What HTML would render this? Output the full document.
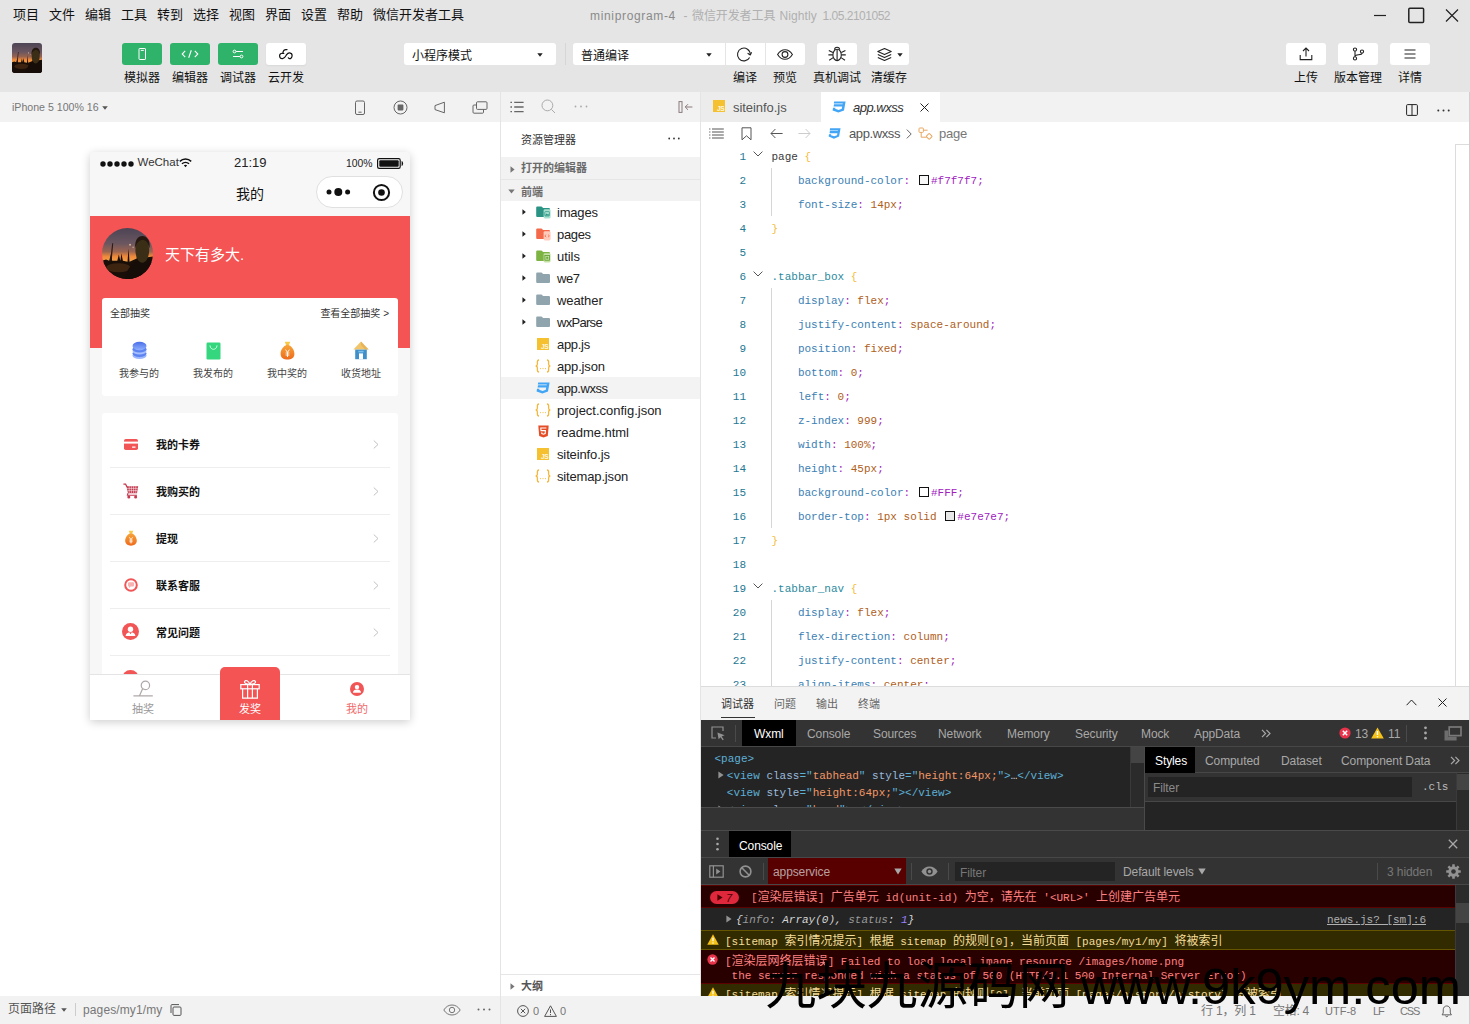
<!DOCTYPE html>
<html lang="zh-CN">
<head>
<meta charset="utf-8">
<title>miniprogram-4 - 微信开发者工具 Nightly 1.05.2101052</title>
<style>
*{box-sizing:border-box;margin:0;padding:0}
html,body{width:1470px;height:1024px;overflow:hidden;background:#fff}
body{font-family:"Liberation Sans","Noto Sans CJK SC",sans-serif;font-size:12px;color:#222;position:relative}
.abs{position:absolute}
.t{position:absolute;white-space:nowrap;line-height:1}
svg{position:absolute;overflow:visible}
/* top */
#menubar{left:0;top:0;width:1470px;height:30px;background:#e5e5e5}
#menubar .t{top:8px;font-size:13px;color:#111}
#toolbar{left:0;top:30px;width:1470px;height:62px;background:#e5e5e5}
.tb{position:absolute;top:13px;height:22px;border-radius:3px;background:#fff}
.tb.g{background:#2fb26a}
.tl{position:absolute;top:41px;font-size:12px;color:#111;white-space:nowrap;line-height:14px;text-align:center}
/* simulator */
#simbar{left:0;top:92px;width:500px;height:30px;background:#f2f2f2}
#simarea{left:0;top:122px;width:500px;height:874px;background:#fff}
#simfoot{left:0;top:996px;width:500px;height:28px;background:#f2f2f2}
#vsplit1{left:500px;top:92px;width:1px;height:932px;background:#e4e4e4}
#vsplit2{left:700px;top:92px;width:1px;height:904px;background:#e4e4e4}

/* phone */
#phone{left:90px;top:152px;width:320px;height:568px;background:#f7f7f7;border-radius:4px 4px 0 0;overflow:hidden;box-shadow:0 2px 10px rgba(0,0,0,.2)}
#phone .t{color:#111}
.card{position:absolute;left:12px;width:296px;background:#fff;border-radius:3px}
.gi{position:absolute;top:71px;width:74px;text-align:center;font-size:10px;color:#444;line-height:10px;white-space:nowrap}
.row{position:absolute;left:8px;width:280px;height:47px;border-bottom:1px solid #eee}
.row .t{left:46px;top:19px;font-size:11px;font-weight:bold;color:#222}
.row .ar{left:263px;top:19px}

/* tree */
#tree{left:501px;top:92px;width:199px;height:904px;background:#fff}
.tr{position:absolute;left:0;width:199px;height:22px}
.tr .t{left:56px;top:4.5px;font-size:13px;color:#222;letter-spacing:-0.2px}
.tr .fa{left:20.8px;top:7.8px}
.tr .ic{left:35px;top:4px}

/* editor */
#editor{left:701px;top:92px;width:769px;height:594px;background:#fff;overflow:hidden}
.mono{font-family:"Liberation Mono","Noto Sans CJK SC",monospace}
.cl{position:absolute;left:0;height:24px;width:760px;font-family:"Liberation Mono",monospace;font-size:11px;line-height:24px;white-space:pre;color:#3a3a3a}
.cl .ln{position:absolute;left:0;width:45px;text-align:right;color:#237893}
.cl .cd{position:absolute;left:70.5px}
.cl .fo{left:52px;top:6px}
.p{color:#3b80b4}.k{color:#a020c0}.v{color:#b0601a}.b{color:#f2bd3e}.s{color:#2b8a9e}
.sw{display:inline-block;width:14.2px;height:10px;position:relative;vertical-align:-1px}
.sw i{position:absolute;left:2.2px;top:0;width:10px;height:10px;border:1px solid #111}

/* debugger */
#debugger{left:701px;top:686px;width:769px;height:310px;background:#242424;overflow:hidden;font-size:12px}
#debugger .dt{position:absolute;white-space:nowrap;line-height:1;font-size:12px;color:#a8a8a8;top:8px;margin-top:1px;letter-spacing:-0.1px}
.el{position:absolute;white-space:pre;font-family:"Liberation Mono",monospace;font-size:11px;line-height:17px;color:#5db0d7}
.el .an{color:#9bbbdc}.el .av{color:#f29766}
.cm{position:absolute;left:0;width:754px;white-space:pre;font-family:"Liberation Mono","Noto Sans CJK SC",monospace;font-size:11px}
.cm .t{font-size:11px;line-height:12px}
.cj{font-size:12px}
#status{left:501px;top:996px;width:969px;height:28px;background:#f2f2f2}
#status .t{top:9.5px;font-size:11px;color:#777}
</style>
</head>
<body>
<!-- ============ MENUBAR ============ -->
<div id="menubar" class="abs">
  <span class="t" style="left:13px">项目</span>
  <span class="t" style="left:49px">文件</span>
  <span class="t" style="left:85px">编辑</span>
  <span class="t" style="left:121px">工具</span>
  <span class="t" style="left:157px">转到</span>
  <span class="t" style="left:193px">选择</span>
  <span class="t" style="left:229px">视图</span>
  <span class="t" style="left:265px">界面</span>
  <span class="t" style="left:301px">设置</span>
  <span class="t" style="left:337px">帮助</span>
  <span class="t" style="left:373px">微信开发者工具</span>
  <span class="t" id="wtitle" style="left:590px;top:10px;font-size:12px;color:#8a8a8a;letter-spacing:0.66px">miniprogram-4</span>
  <span class="t" style="left:683.5px;top:10px;font-size:12px;color:#b0b0b0">-</span>
  <span class="t" style="left:692px;top:10px;font-size:12px;color:#b0b0b0;letter-spacing:-0.1px">微信开发者工具</span>
  <span class="t" style="left:779.5px;top:10px;font-size:12px;color:#b0b0b0;letter-spacing:0.1px">Nightly</span>
  <span class="t" style="left:822.5px;top:10px;font-size:12px;color:#b0b0b0;letter-spacing:-0.49px">1.05.2101052</span>
  <svg style="left:1373px;top:8px" width="90" height="16" viewBox="0 0 90 16" fill="none" stroke="#222" stroke-width="1.2">
    <path d="M1 7.5H13"/>
    <rect x="35.8" y="0.2" width="14.8" height="14.4" rx="1" stroke-width="1.5"/>
    <path d="M73 1.5L85 13.5M85 1.5L73 13.5"/>
  </svg>
</div>
<!-- ============ TOOLBAR ============ -->
<div id="toolbar" class="abs">
  <div class="abs" id="tavatar" style="left:12px;top:13px;width:30px;height:30px;border-radius:3px;overflow:hidden"><svg style="left:0;top:0" width="30" height="30" viewBox="0 0 100 100" preserveAspectRatio="none"><defs><linearGradient id="sky2" x1="0" y1="0" x2="0" y2="1"><stop offset="0" stop-color="#4c4454"/><stop offset=".3" stop-color="#6a5660"/><stop offset=".46" stop-color="#9a6450"/><stop offset=".56" stop-color="#ee8a3a"/><stop offset=".66" stop-color="#f2a24c"/><stop offset=".7" stop-color="#3a1e0e"/><stop offset="1" stop-color="#120a06"/></linearGradient></defs>
<rect width="100" height="100" fill="url(#sky2)"/>
<path d="M0 64L8 62L14 64L18 50L20 64L30 64L33 52L36 64L38 50L41 64L50 66L52 40L54 66L68 60L69 48L71 60L100 56V100H0Z" fill="#1a0e08"/>
<path d="M20 30L22 30L19 64L16 64Z" fill="#2a1a18"/>
<ellipse cx="32" cy="78" rx="24" ry="9" fill="#3c2410"/>
<path d="M46 100C48 80 56 72 70 64L92 60L100 70V100Z" fill="#160c08"/>
<ellipse cx="79" cy="43" rx="13.5" ry="25" fill="#3a2e16"/>
<path d="M65 40C64 22 72 14 82 16C92 18 95 30 93 40C90 26 84 22 76 24C70 26 67 32 65 40Z" fill="#241810"/>
<circle cx="55" cy="33" r="2" fill="#e8c8a8" opacity=".8"/><circle cx="61" cy="38" r="1.6" fill="#e8c8a8" opacity=".6"/></svg></div>
  <div class="tb g" style="left:122px;width:40px"><svg style="left:14px;top:5px" width="12" height="12" viewBox="0 0 12 12" fill="none" stroke="#fff" stroke-width="1"><rect x="3" y="0.5" width="6.5" height="11" rx="0.6"/><path d="M4.8 2.4H7.8"/></svg></div>
  <div class="tb g" style="left:170px;width:40px"><svg style="left:11px;top:6px" width="18" height="10" viewBox="0 0 18 10" fill="none" stroke="#fff" stroke-width="1.1"><path d="M4.2 1.8L1.2 5L4.2 8.2M13.8 1.8L16.8 5L13.8 8.2M10.3 1.2L7.7 8.8"/></svg></div>
  <div class="tb g" style="left:218px;width:40px"><svg style="left:14px;top:6px" width="12" height="10" viewBox="0 0 12 10" fill="none" stroke="#fff" stroke-width="1"><circle cx="2.5" cy="2.5" r="1.4"/><path d="M4 2.5H11"/><circle cx="9.5" cy="7.5" r="1.4"/><path d="M1 7.5H8"/></svg></div>
  <div class="tb" style="left:266px;width:40px;box-shadow:0 1px 2px rgba(0,0,0,.06)"><svg style="left:12.8px;top:5.8px" width="14" height="10.5" viewBox="0 0 14 10.5" fill="none" stroke="#111" stroke-width="1.2" stroke-linecap="round"><path d="M8 0.7C5.4 0.1 4 1.4 3.9 4.3C1.6 4 0.4 5.4 0.6 7C0.8 8.8 2.2 9.8 3.6 9.7C5.6 9.6 6.6 7.2 7.6 5.6C8.6 4.2 9.6 3.7 10.6 3.8C12.2 4 13.2 5.2 13.1 6.8C13 8.6 11.6 9.8 10.4 9.6C9.8 9.5 9.5 9.2 9.3 8.8"/><path d="M3.9 4.3L4.9 4.5"/></svg></div>
  <div class="tl" style="left:122px;width:40px">模拟器</div>
  <div class="tl" style="left:170px;width:40px">编辑器</div>
  <div class="tl" style="left:218px;width:40px">调试器</div>
  <div class="tl" style="left:266px;width:40px">云开发</div>

  <div class="tb" style="left:404px;width:152px"><span class="t" style="left:8px;top:6.5px;font-size:12px;color:#111">小程序模式</span><svg style="left:133px;top:9.7px" width="6" height="4" viewBox="0 0 6 4"><path d="M0.3 0.3H5.7L3 3.8Z" fill="#222"/></svg></div>
  <div class="abs" style="left:565px;top:13px;width:1px;height:22px;background:#d6d6d6"></div>
  <div class="tb" style="left:573px;width:232px"><span class="t" style="left:8px;top:6.5px;font-size:12px;color:#111">普通编译</span><svg style="left:133px;top:9.7px" width="6" height="4" viewBox="0 0 6 4"><path d="M0.3 0.3H5.7L3 3.8Z" fill="#222"/></svg>
    <div class="abs" style="left:152px;top:0;width:1px;height:22px;background:#e5e5e5"></div>
    <div class="abs" style="left:192px;top:0;width:1px;height:22px;background:#e5e5e5"></div>
    <svg style="left:163.3px;top:3.8px" width="16" height="16" viewBox="0 0 16 16" fill="none" stroke="#222" stroke-width="1.1"><path d="M13.6 10.4A6.4 6.4 0 1 1 14.3 7.4"/><path d="M11.6 6.2L14.3 8L15.6 5.2" stroke-linejoin="round"/></svg>
    <svg style="left:204px;top:5.5px" width="16" height="11" viewBox="0 0 16 11" fill="none" stroke="#222" stroke-width="1.1"><path d="M0.6 5.5C2.6 2.2 5.2 0.7 8 0.7C10.8 0.7 13.4 2.2 15.4 5.5C13.4 8.8 10.8 10.3 8 10.3C5.2 10.3 2.6 8.8 0.6 5.5Z"/><circle cx="8" cy="5.5" r="2.9"/></svg>
  </div>
  <div class="tb" style="left:817px;width:40px"><svg style="left:11px;top:2px" width="18" height="18" viewBox="0 0 18 18" fill="none" stroke="#222" stroke-width="1.1"><ellipse cx="9.1" cy="9.9" rx="4.2" ry="5.7"/><path d="M9.1 4.4V15.4M6.5 4.8C6.6 3 7.6 2.2 9.1 2.2C10.6 2.2 11.6 3 11.7 4.8M4.9 7.6L0.8 5.4M13.3 7.6L17.4 5.4M4.8 9.9H0.4M13.4 9.9H17.8M5.2 12.6L1.2 15.2M13 12.6L17 15.2"/></svg></div>
  <div class="tb" style="left:869px;width:40px"><svg style="left:7.5px;top:4.6px" width="15" height="13" viewBox="0 0 15 13" fill="none" stroke="#222" stroke-width="1.1" stroke-linejoin="round"><path d="M7.5 0.6L14.2 3.6L7.5 6.6L0.8 3.6Z"/><path d="M0.8 6.6L7.5 9.6L14.2 6.6"/><path d="M0.8 9.4L7.5 12.4L14.2 9.4"/></svg><svg style="left:28px;top:9.7px" width="6" height="4" viewBox="0 0 6 4"><path d="M0.3 0.3H5.7L3 3.8Z" fill="#222"/></svg></div>
  <div class="tl" style="left:725px;width:40px">编译</div>
  <div class="tl" style="left:765px;width:40px">预览</div>
  <div class="tl" style="left:807px;width:60px">真机调试</div>
  <div class="tl" style="left:859px;width:60px">清缓存</div>

  <div class="tb" style="left:1286px;width:40px"><svg style="left:13px;top:4px" width="14" height="14" viewBox="0 0 14 14" fill="none" stroke="#222" stroke-width="1.1"><path d="M7 9.5V1.2M4 4L7 1.1L10 4M1.2 8V12.6H12.8V8"/></svg></div>
  <div class="tb" style="left:1338px;width:40px"><svg style="left:14px;top:4px" width="13" height="14" viewBox="0 0 13 14" fill="none" stroke="#222" stroke-width="1.1"><circle cx="3" cy="2.6" r="1.6"/><circle cx="3" cy="11.4" r="1.6"/><circle cx="10" cy="4.6" r="1.6"/><path d="M3 4.2V9.8M3 9.4C3 7 10 8.6 10 6.2"/></svg></div>
  <div class="tb" style="left:1390px;width:40px"><svg style="left:14px;top:6px" width="12" height="10" viewBox="0 0 12 10" fill="none" stroke="#222" stroke-width="1.2"><path d="M0.5 1H11.5M0.5 5H11.5M0.5 9H11.5"/></svg></div>
  <div class="tl" style="left:1276px;width:60px">上传</div>
  <div class="tl" style="left:1328px;width:60px">版本管理</div>
  <div class="tl" style="left:1380px;width:60px">详情</div>
</div>
<!-- ============ SIMULATOR ============ -->
<div id="simbar" class="abs">
  <span class="t" style="left:12px;top:10px;font-size:10.6px;color:#777">iPhone 5 100% 16</span>
  <svg style="left:102px;top:13.5px" width="6" height="4" viewBox="0 0 6 4"><path d="M0.2 0.3H5.8L3 3.8Z" fill="#555"/></svg>
  <svg style="left:354px;top:8px" width="12" height="16" viewBox="0 0 12 16" fill="none" stroke="#666" stroke-width="1"><rect x="1.5" y="1" width="9" height="13.5" rx="1.5"/><path d="M4.4 12.2H7.6"/></svg>
  <svg style="left:393px;top:8px" width="15" height="15" viewBox="0 0 15 15" fill="none" stroke="#666" stroke-width="1"><circle cx="7.5" cy="7.5" r="6.5"/><rect x="4.6" y="4.6" width="5.8" height="5.8" rx="0.8" fill="#666" stroke="none"/></svg>
  <svg style="left:434px;top:9px" width="12" height="13" viewBox="0 0 12 13" fill="none" stroke="#666" stroke-width="1" stroke-linejoin="round"><path d="M1 4.6V8.6L10.4 11.8V1.2Z"/></svg>
  <svg style="left:472px;top:9px" width="16" height="13" viewBox="0 0 16 13" fill="none" stroke="#666" stroke-width="1"><rect x="4.5" y="0.8" width="10.5" height="7.6" rx="1"/><path d="M4.5 4H2A1 1 0 0 0 1 5V11.2A1 1 0 0 0 2 12.2H10.5A1 1 0 0 0 11.5 11.2V8.6"/></svg>
</div>
<div id="simarea" class="abs"></div>
<div id="phone" class="abs">
  <!-- status -->
  <svg style="left:10px;top:8px" width="36" height="8" viewBox="0 0 36 8"><g fill="#111"><circle cx="3" cy="4" r="2.7"/><circle cx="10" cy="4" r="2.7"/><circle cx="17" cy="4" r="2.7"/><circle cx="24" cy="4" r="2.7"/><circle cx="31" cy="4" r="2.7"/></g></svg>
  <span class="t" style="left:47.5px;top:5px;font-size:11.5px;color:#333">WeChat</span>
  <svg style="left:89px;top:6px" width="13" height="10" viewBox="0 0 13 10" fill="none" stroke="#111" stroke-width="1.5"><path d="M0.8 3.4C4 0.3 9 0.3 12.2 3.4"/><path d="M3 5.8C5 3.9 8 3.9 10 5.8"/><path d="M6.5 9.2L4.8 7.3C5.8 6.5 7.2 6.5 8.2 7.3Z" fill="#111" stroke="none"/></svg>
  <span class="t" style="left:144px;top:4px;font-size:13px;color:#222;width:32px;text-align:center">21:19</span>
  <span class="t" style="left:256px;top:6.5px;font-size:10.4px;color:#222">100%</span>
  <svg style="left:287px;top:6px" width="27" height="11" viewBox="0 0 27 11"><rect x="0.6" y="0.6" width="22.6" height="9.8" rx="1.6" fill="none" stroke="#111" stroke-width="1.2"/><rect x="2.3" y="2.3" width="19.4" height="6.4" rx="1" fill="#111"/><path d="M24.6 3C26.6 3.6 26.6 7.4 24.6 8Z" fill="#111"/></svg>
  <!-- nav -->
  <span class="t" style="left:140px;top:35px;width:40px;text-align:center;font-size:14px;color:#111">我的</span>
  <div class="abs" style="left:226px;top:24px;width:87px;height:32px;border:1px solid #e0e0e0;border-radius:16px;background:#fff">
    <svg style="left:9px;top:10px" width="25" height="10" viewBox="0 0 25 10" fill="#111"><circle cx="3" cy="5" r="2.5"/><circle cx="12.3" cy="5" r="4"/><circle cx="21.6" cy="5" r="2.5"/></svg>
    <svg style="left:55px;top:6px" width="19" height="19" viewBox="0 0 19 19"><circle cx="9.5" cy="9.5" r="7.6" fill="none" stroke="#111" stroke-width="2"/><circle cx="9.5" cy="9.5" r="3.3" fill="#111"/></svg>
  </div>
  <!-- red header -->
  <div class="abs" style="left:0;top:64px;width:320px;height:132px;background:#f45454"></div>
  <div class="abs" id="pavatar" style="left:12px;top:76px;width:51px;height:51px;border-radius:50%;overflow:hidden"><svg style="left:0;top:0" width="51" height="51" viewBox="0 0 100 100" preserveAspectRatio="none"><defs><linearGradient id="sky" x1="0" y1="0" x2="0" y2="1"><stop offset="0" stop-color="#4c4454"/><stop offset=".3" stop-color="#6a5660"/><stop offset=".46" stop-color="#9a6450"/><stop offset=".56" stop-color="#ee8a3a"/><stop offset=".66" stop-color="#f2a24c"/><stop offset=".7" stop-color="#3a1e0e"/><stop offset="1" stop-color="#120a06"/></linearGradient></defs>
<rect width="100" height="100" fill="url(#sky)"/>
<path d="M0 64L8 62L14 64L18 50L20 64L30 64L33 52L36 64L38 50L41 64L50 66L52 40L54 66L68 60L69 48L71 60L100 56V100H0Z" fill="#1a0e08"/>
<path d="M20 30L22 30L19 64L16 64Z" fill="#2a1a18"/>
<ellipse cx="32" cy="78" rx="24" ry="9" fill="#3c2410"/>
<path d="M46 100C48 80 56 72 70 64L92 60L100 70V100Z" fill="#160c08"/>
<ellipse cx="79" cy="43" rx="13.5" ry="25" fill="#3a2e16"/>
<path d="M65 40C64 22 72 14 82 16C92 18 95 30 93 40C90 26 84 22 76 24C70 26 67 32 65 40Z" fill="#241810"/>
<circle cx="55" cy="33" r="2" fill="#e8c8a8" opacity=".8"/><circle cx="61" cy="38" r="1.6" fill="#e8c8a8" opacity=".6"/></svg></div>
  <span class="t" style="left:75px;top:95px;font-size:15px;color:#fff">天下有多大.</span>
  <!-- card 1 -->
  <div class="card" style="top:146px;height:98px">
    <span class="t" style="left:8px;top:11px;font-size:10px;color:#333">全部抽奖</span>
    <span class="t" style="right:9px;top:11px;font-size:10px;color:#333">查看全部抽奖 &gt;</span>
    <svg style="left:30px;top:43px" width="15" height="19" viewBox="0 0 15 19"><defs><linearGradient id="gb" x1="0" y1="0" x2="0" y2="1"><stop offset="0" stop-color="#4a6fe8"/><stop offset="1" stop-color="#8fb0ff"/></linearGradient></defs><ellipse cx="7.5" cy="14.5" rx="7" ry="3.6" fill="#9db8ff"/><ellipse cx="7.5" cy="12.6" rx="7" ry="3.4" fill="#5d83f0"/><ellipse cx="7.5" cy="10" rx="7" ry="3.6" fill="#a6bfff"/><ellipse cx="7.5" cy="8.2" rx="7" ry="3.4" fill="#5d83f0"/><ellipse cx="7.5" cy="5" rx="7" ry="4.2" fill="url(#gb)"/></svg>
    <svg style="left:104px;top:44px" width="15" height="18" viewBox="0 0 15 18"><rect x="0.5" y="0.5" width="14" height="17" rx="1.2" fill="#34d67e"/><path d="M4 3.4C4 8.6 11 8.6 11 3.4" fill="none" stroke="#d8ffe8" stroke-width="0.9"/></svg>
    <svg style="left:178px;top:43px" width="15" height="19" viewBox="0 0 15 19"><defs><linearGradient id="go" x1="0" y1="0" x2="0" y2="1"><stop offset="0" stop-color="#f7a63a"/><stop offset="1" stop-color="#ee6a1c"/></linearGradient></defs><path d="M4.8 0.8H10.2L9 4H6Z" fill="#f7c948"/><path d="M7.5 3.6C12 5 14.6 9.4 14.4 13.2C14.2 17 11 18.6 7.5 18.6C4 18.6 0.8 17 0.6 13.2C0.4 9.4 3 5 7.5 3.6Z" fill="url(#go)"/><path d="M5.6 8.6L7.5 11.4L9.4 8.6M5.6 12H9.4M5.6 14H9.4M7.5 11.4V16" fill="none" stroke="#fff" stroke-width="0.9"/></svg>
    <svg style="left:251px;top:43px" width="16" height="19" viewBox="0 0 16 19"><path d="M8 0.4L15.6 8.6H0.4Z" fill="#f2c56b"/><path d="M8 0.4L15.6 8.6H12L8 4Z" fill="#e0a94a" opacity=".6"/><rect x="2.2" y="8.6" width="11.6" height="9.6" fill="#3f8fc8"/><rect x="6" y="12.4" width="4" height="5.8" fill="#fff"/><rect x="5.4" y="9.8" width="5.2" height="1.6" fill="#7fc0ea"/></svg>
    <div class="gi" style="left:0">我参与的</div>
    <div class="gi" style="left:74px">我发布的</div>
    <div class="gi" style="left:148px">我中奖的</div>
    <div class="gi" style="left:222px">收货地址</div>
  </div>
  <!-- card 2 -->
  <div class="card" style="top:261px;height:330px">
    <div class="row" style="top:8px"><span class="t">我的卡券</span>
      <svg style="left:13.5px;top:17.7px" width="14" height="11" viewBox="0 0 14 11"><rect width="14" height="11" rx="1.8" fill="#f25555"/><rect y="2.6" width="14" height="2" fill="#fff"/><rect x="8" y="7.4" width="3.6" height="1.3" rx=".4" fill="#fff"/></svg>
      <svg class="ar" width="6" height="9" viewBox="0 0 6 9" fill="none" stroke="#c2c2c2" stroke-width="1"><path d="M0.8 0.6L5 4.5L0.8 8.4"/></svg></div>
    <div class="row" style="top:55px"><span class="t">我购买的</span>
      <svg style="left:12.5px;top:15.4px" width="16" height="16" viewBox="0 0 16 16"><path d="M0.4 1.2H2.6L4 4" fill="none" stroke="#c4374c" stroke-width="1.2"/><path d="M3.4 3.2H15.2L14 10.2H5Z" fill="#c4374c"/><path d="M6.2 3.2V10M8.4 3.2V10M10.6 3.2V10M12.8 3.2V10M4 5.4H14.8M4.6 7.6H14.4" stroke="#fff" stroke-width=".5"/><path d="M5 10.2L4.4 12.2H14" fill="none" stroke="#c4374c" stroke-width="1.1"/><circle cx="5.8" cy="14" r="1.5" fill="#c4374c"/><circle cx="12.6" cy="14" r="1.5" fill="#c4374c"/></svg>
      <svg class="ar" width="6" height="9" viewBox="0 0 6 9" fill="none" stroke="#c2c2c2" stroke-width="1"><path d="M0.8 0.6L5 4.5L0.8 8.4"/></svg></div>
    <div class="row" style="top:102px"><span class="t">提现</span>
      <svg style="left:13.5px;top:14.7px" width="14" height="16" viewBox="0 0 15 19"><path d="M4.8 0.8H10.2L9 4H6Z" fill="#f7c948"/><path d="M7.5 3.6C12 5 14.6 9.4 14.4 13.2C14.2 17 11 18.6 7.5 18.6C4 18.6 0.8 17 0.6 13.2C0.4 9.4 3 5 7.5 3.6Z" fill="url(#go)"/><path d="M5.6 8.6L7.5 11.4L9.4 8.6M5.6 12H9.4M5.6 14H9.4M7.5 11.4V16" fill="none" stroke="#fff" stroke-width="1"/></svg>
      <svg class="ar" width="6" height="9" viewBox="0 0 6 9" fill="none" stroke="#c2c2c2" stroke-width="1"><path d="M0.8 0.6L5 4.5L0.8 8.4"/></svg></div>
    <div class="row" style="top:149px"><span class="t">联系客服</span>
      <svg style="left:14px;top:16px" width="14" height="14" viewBox="0 0 14 14"><circle cx="7" cy="7" r="5.8" fill="#fff" stroke="#f25555" stroke-width="2"/><path d="M4 5.2A1 1 0 0 1 5 4.2H9A1 1 0 0 1 10 5.2V7.6A1 1 0 0 1 9 8.6H6.6L5 10V8.6A1 1 0 0 1 4 7.6Z" fill="#f9b0b0"/></svg>
      <svg class="ar" width="6" height="9" viewBox="0 0 6 9" fill="none" stroke="#c2c2c2" stroke-width="1"><path d="M0.8 0.6L5 4.5L0.8 8.4"/></svg></div>
    <div class="row" style="top:196px"><span class="t">常见问题</span>
      <svg style="left:12px;top:14.2px" width="17" height="17" viewBox="0 0 17 17"><circle cx="8.5" cy="8.5" r="8.5" fill="#f25555"/><circle cx="8.5" cy="6.2" r="2.7" fill="#fff"/><path d="M3.6 13C3.8 10.4 5.6 9.2 8.5 9.2C11.4 9.2 13.2 10.4 13.4 13Z" fill="#fff"/><path d="M7.2 9.2L8.5 11.2L9.8 9.2Z" fill="#f25555"/></svg>
      <svg class="ar" width="6" height="9" viewBox="0 0 6 9" fill="none" stroke="#c2c2c2" stroke-width="1"><path d="M0.8 0.6L5 4.5L0.8 8.4"/></svg></div>
    <div class="row" style="top:243px;border:0">
      <svg style="left:12px;top:14.2px" width="17" height="17" viewBox="0 0 17 17"><circle cx="8.5" cy="8.5" r="8.5" fill="#f25555"/></svg></div>
  </div>
  <!-- tabbar -->
  <div class="abs" style="left:0;top:522px;width:320px;height:46px;background:#fff;border-top:1px solid #e4e4e4"></div>
  <div class="abs" style="left:130px;top:515px;width:60px;height:53px;background:#f45454;border-radius:5px 5px 0 0"></div>
  <svg style="left:43px;top:528px" width="20" height="18" viewBox="0 0 20 18" fill="none" stroke="#b0a8a8" stroke-width="1.2"><circle cx="12.4" cy="5.4" r="4.2"/><path d="M9.6 8.8L6.6 15.6M0.4 15.8H19.8"/></svg>
  <span class="t" style="left:33px;top:552px;width:40px;text-align:center;font-size:11px;color:#999">抽奖</span>
  <svg style="left:150px;top:527px" width="20" height="20" viewBox="0 0 20 20" fill="none" stroke="#fff" stroke-width="1.2"><rect x="0.8" y="5.6" width="18.4" height="4.2"/><path d="M2.6 9.8V19.2H17.4V9.8"/><path d="M7.6 5.6V19.2M12.4 5.6V19.2"/><path d="M10 5.4C8.6 1.6 5.4 0.6 4.6 2.4C3.8 4.2 6.4 5.4 10 5.4C13.6 5.4 16.2 4.2 15.4 2.4C14.6 0.6 11.4 1.6 10 5.4Z"/></svg>
  <span class="t" style="left:140px;top:552px;width:40px;text-align:center;font-size:11px;color:#fff">发奖</span>
  <svg style="left:260px;top:530px" width="14" height="14" viewBox="0 0 17 17"><circle cx="8.5" cy="8.5" r="8.5" fill="#f25555"/><circle cx="8.5" cy="6.2" r="2.7" fill="#fff"/><path d="M3.6 13C3.8 10.4 5.6 9.2 8.5 9.2C11.4 9.2 13.2 10.4 13.4 13Z" fill="#fff"/></svg>
  <span class="t" style="left:247px;top:552px;width:40px;text-align:center;font-size:11px;color:#f06a6a">我的</span>
</div>
<div id="simfoot" class="abs">
  <span class="t" style="left:8px;top:7px;font-size:12px;color:#555">页面路径</span>
  <svg style="left:61px;top:12px" width="6" height="4" viewBox="0 0 6 4"><path d="M0.2 0.3H5.8L3 3.8Z" fill="#555"/></svg>
  <div class="abs" style="left:75px;top:7px;width:1px;height:13px;background:#ccc"></div>
  <span class="t" style="left:83px;top:8px;font-size:12px;color:#777;letter-spacing:0.12px">pages/my1/my</span>
  <svg style="left:170px;top:8px" width="12" height="12" viewBox="0 0 12 12" fill="none" stroke="#555" stroke-width="1"><rect x="3" y="3" width="8" height="8.4" rx="1"/><path d="M1 9V1.6A1 1 0 0 1 2 0.6H9"/></svg>
  <svg style="left:443px;top:8px" width="18" height="12" viewBox="0 0 18 12" fill="none" stroke="#777" stroke-width="1"><path d="M0.8 6C3 2.4 6 1 9 1C12 1 15 2.4 17.2 6C15 9.6 12 11 9 11C6 11 3 9.6 0.8 6Z"/><circle cx="9" cy="6" r="2.7"/></svg>
  <svg style="left:477px;top:12px" width="14" height="3" viewBox="0 0 14 3" fill="#666"><circle cx="1.5" cy="1.5" r="1"/><circle cx="7" cy="1.5" r="1"/><circle cx="12.5" cy="1.5" r="1"/></svg>
</div>
<!-- ============ TREE ============ -->
<div id="tree" class="abs">
  <div class="abs" style="left:0;top:0;width:199px;height:30px;background:#f2f2f2">
    <svg style="left:9px;top:9px" width="14" height="12" viewBox="0 0 14 12" fill="none" stroke="#666" stroke-width="1.3"><path d="M0.4 1.4H2M4.2 1.4H13.6M0.4 6H2M4.2 6H13.6M0.4 10.6H2M4.2 10.6H13.6"/></svg>
    <svg style="left:40px;top:7px" width="15" height="15" viewBox="0 0 15 15" fill="none" stroke="#aaa" stroke-width="1"><circle cx="6.4" cy="6.4" r="5.4"/><path d="M10.4 10.4L14 14"/></svg>
    <svg style="left:73px;top:13px" width="14" height="3" viewBox="0 0 14 3" fill="#aaa"><circle cx="1.5" cy="1.5" r="0.9"/><circle cx="7" cy="1.5" r="0.9"/><circle cx="12.5" cy="1.5" r="0.9"/></svg>
    <svg style="left:177px;top:9px" width="15" height="12" viewBox="0 0 15 12" fill="none" stroke="#8a7a7a" stroke-width="1"><rect x="1" y="0.6" width="3" height="10.8"/><path d="M14.4 6H7.4M10 3.2L7.2 6L10 8.8"/></svg>
  </div>
  <span class="t" style="left:20px;top:42.8px;font-size:11px;color:#333">资源管理器</span>
  <svg style="left:167px;top:45px" width="12" height="3" viewBox="0 0 12 3" fill="#333"><circle cx="1.2" cy="1.5" r="0.9"/><circle cx="6" cy="1.5" r="0.9"/><circle cx="10.8" cy="1.5" r="0.9"/></svg>
  <div class="abs" style="left:0;top:65px;width:199px;height:22px;background:#f2f2f2"></div>
  <div class="abs" style="left:0;top:87px;width:199px;height:1px;background:#e6e6e6"></div>
  <div class="abs" style="left:0;top:88px;width:199px;height:21px;background:#f2f2f2"></div>
  <svg style="left:8.5px;top:73.5px" width="5" height="7" viewBox="0 0 5 7"><path d="M0.5 0.3L4.6 3.5L0.5 6.7Z" fill="#777"/></svg>
  <span class="t" style="left:20px;top:71px;font-size:11px;font-weight:bold;color:#6a6a6a">打开的编辑器</span>
  <svg style="left:7px;top:97px" width="7" height="5" viewBox="0 0 7 5"><path d="M0.3 0.5L3.5 4.6L6.7 0.5Z" fill="#777"/></svg>
  <span class="t" style="left:20px;top:94.7px;font-size:11px;font-weight:bold;color:#6a6a6a">前端</span>
  <div class="abs" style="left:0;top:285px;width:199px;height:22px;background:#f3f3f3"></div>
  <div class="tr" style="top:109px"><svg class="fa" width="4.2" height="6" viewBox="0 0 5 7"><path d="M0.5 0.3L4.6 3.5L0.5 6.7Z" fill="#222"/></svg><svg class="ic" width="15" height="14" viewBox="0 0 15 14"><path d="M0.2 2.6A1.1 1.1 0 0 1 1.3 1.5H5.4A1 1 0 0 1 6.2 1.9L7 2.9H12.9A1.1 1.1 0 0 1 14 4V11A1.1 1.1 0 0 1 12.9 12.1H1.3A1.1 1.1 0 0 1 0.2 11Z" fill="#2a9384"/><rect x="7.6" y="4.2" width="7" height="9.3" rx="1.4" fill="#a8e0d0"/><rect x="8.8" y="6.6" width="4.6" height="4.4" rx=".6" fill="none" stroke="#2a9384" stroke-width=".7"/><path d="M9 10.6L10.6 8.6L11.6 9.6L12.4 9L13.2 10.6Z" fill="#2a9384"/></svg><span class="t" style="letter-spacing:-0.2px">images</span></div>
  <div class="tr" style="top:131px"><svg class="fa" width="4.2" height="6" viewBox="0 0 5 7"><path d="M0.5 0.3L4.6 3.5L0.5 6.7Z" fill="#222"/></svg><svg class="ic" width="15" height="14" viewBox="0 0 15 14"><path d="M0.2 2.6A1.1 1.1 0 0 1 1.3 1.5H5.4A1 1 0 0 1 6.2 1.9L7 2.9H12.9A1.1 1.1 0 0 1 14 4V11A1.1 1.1 0 0 1 12.9 12.1H1.3A1.1 1.1 0 0 1 0.2 11Z" fill="#f4694a"/><rect x="7.6" y="4.2" width="7" height="9.3" rx="1.4" fill="#ffccbc"/><path d="M10.2 7.6L8.8 8.9L10.2 10.2M12 7.6L13.4 8.9L12 10.2" fill="none" stroke="#f4694a" stroke-width=".8"/></svg><span class="t" style="letter-spacing:-0.34px">pages</span></div>
  <div class="tr" style="top:153px"><svg class="fa" width="4.2" height="6" viewBox="0 0 5 7"><path d="M0.5 0.3L4.6 3.5L0.5 6.7Z" fill="#222"/></svg><svg class="ic" width="15" height="14" viewBox="0 0 15 14"><path d="M0.2 2.6A1.1 1.1 0 0 1 1.3 1.5H5.4A1 1 0 0 1 6.2 1.9L7 2.9H12.9A1.1 1.1 0 0 1 14 4V11A1.1 1.1 0 0 1 12.9 12.1H1.3A1.1 1.1 0 0 1 0.2 11Z" fill="#7cb342"/><rect x="7.6" y="4.2" width="7" height="9.3" rx="1.4" fill="#c5e1a5"/><rect x="8.9" y="6.6" width="4.6" height="4.6" fill="none" stroke="#5a9a28" stroke-width=".8"/><path d="M11.2 7.6V10.2M9.9 8.9H12.5" stroke="#5a9a28" stroke-width=".8"/></svg><span class="t" style="letter-spacing:-0.04px">utils</span></div>
  <div class="tr" style="top:175px"><svg class="fa" width="4.2" height="6" viewBox="0 0 5 7"><path d="M0.5 0.3L4.6 3.5L0.5 6.7Z" fill="#222"/></svg><svg class="ic" width="15" height="14" viewBox="0 0 15 14"><path d="M0.2 2.6A1.1 1.1 0 0 1 1.3 1.5H5.4A1 1 0 0 1 6.2 1.9L7 2.9H12.9A1.1 1.1 0 0 1 14 4V11A1.1 1.1 0 0 1 12.9 12.1H1.3A1.1 1.1 0 0 1 0.2 11Z" fill="#90a4ae"/></svg><span class="t" style="letter-spacing:-0.45px">we7</span></div>
  <div class="tr" style="top:197px"><svg class="fa" width="4.2" height="6" viewBox="0 0 5 7"><path d="M0.5 0.3L4.6 3.5L0.5 6.7Z" fill="#222"/></svg><svg class="ic" width="15" height="14" viewBox="0 0 15 14"><path d="M0.2 2.6A1.1 1.1 0 0 1 1.3 1.5H5.4A1 1 0 0 1 6.2 1.9L7 2.9H12.9A1.1 1.1 0 0 1 14 4V11A1.1 1.1 0 0 1 12.9 12.1H1.3A1.1 1.1 0 0 1 0.2 11Z" fill="#90a4ae"/></svg><span class="t" style="letter-spacing:-0.09px">weather</span></div>
  <div class="tr" style="top:219px"><svg class="fa" width="4.2" height="6" viewBox="0 0 5 7"><path d="M0.5 0.3L4.6 3.5L0.5 6.7Z" fill="#222"/></svg><svg class="ic" width="15" height="14" viewBox="0 0 15 14"><path d="M0.2 2.6A1.1 1.1 0 0 1 1.3 1.5H5.4A1 1 0 0 1 6.2 1.9L7 2.9H12.9A1.1 1.1 0 0 1 14 4V11A1.1 1.1 0 0 1 12.9 12.1H1.3A1.1 1.1 0 0 1 0.2 11Z" fill="#90a4ae"/></svg><span class="t" style="letter-spacing:-0.7px">wxParse</span></div>
  <div class="tr" style="top:241px"><svg class="ic" style="left:36px;top:5px" width="12" height="12" viewBox="0 0 12 12"><rect width="12" height="12" fill="#f5c131"/><text x="4" y="10.8" font-family="Liberation Sans,sans-serif" font-size="6.5" font-weight="bold" fill="#fff8e0" letter-spacing="-0.3">JS</text></svg><span class="t" style="letter-spacing:-0.3px">app.js</span></div>
  <div class="tr" style="top:263px"><svg class="ic" style="left:34px;top:4px" width="16" height="14" viewBox="0 0 16 14"><path d="M4 1C2.6 1 2.4 1.8 2.4 3V5C2.4 6.2 1.8 6.8 0.8 7C1.8 7.2 2.4 7.8 2.4 9V11C2.4 12.2 2.6 13 4 13M12 1C13.4 1 13.6 1.8 13.6 3V5C13.6 6.2 14.2 6.8 15.2 7C14.2 7.2 13.6 7.8 13.6 9V11C13.6 12.2 13.4 13 12 13" fill="none" stroke="#f2b73c" stroke-width="1.3"/><g fill="#f2b73c"><circle cx="5.6" cy="9.6" r=".55"/><circle cx="8" cy="9.6" r=".55"/><circle cx="10.4" cy="9.6" r=".55"/></g></svg><span class="t" style="letter-spacing:-0.17px">app.json</span></div>
  <div class="tr" style="top:285px"><svg class="ic" style="left:35px;top:5px" width="14" height="12" viewBox="0 0 14 12"><path d="M2.2 0.4H13.6L12 9.4L6.4 11.6L0.6 9.4L1 6.8H3.4L3.2 7.8L6.6 9L9.8 7.8L10.2 5.6H1.6L2 3.2H10.6L10.8 2.6H1.8Z" fill="#42a5f5"/></svg><span class="t" style="letter-spacing:-0.45px">app.wxss</span></div>
  <div class="tr" style="top:307px"><svg class="ic" style="left:34px;top:4px" width="16" height="14" viewBox="0 0 16 14"><path d="M4 1C2.6 1 2.4 1.8 2.4 3V5C2.4 6.2 1.8 6.8 0.8 7C1.8 7.2 2.4 7.8 2.4 9V11C2.4 12.2 2.6 13 4 13M12 1C13.4 1 13.6 1.8 13.6 3V5C13.6 6.2 14.2 6.8 15.2 7C14.2 7.2 13.6 7.8 13.6 9V11C13.6 12.2 13.4 13 12 13" fill="none" stroke="#f2b73c" stroke-width="1.3"/><g fill="#f2b73c"><circle cx="5.6" cy="9.6" r=".55"/><circle cx="8" cy="9.6" r=".55"/><circle cx="10.4" cy="9.6" r=".55"/></g></svg><span class="t" style="letter-spacing:-0.01px">project.config.json</span></div>
  <div class="tr" style="top:329px"><svg class="ic" style="left:37px;top:4px" width="11" height="13" viewBox="0 0 11 13"><path d="M0.3 0.4H10.7L9.8 11L5.5 12.6L1.2 11Z" fill="#e44d26"/><path d="M8.4 3H2.8L3 5.6H7.4L7.2 8.6L5.5 9.2L3.8 8.6L3.7 7.4" fill="none" stroke="#fff" stroke-width="1.1"/></svg><span class="t" style="letter-spacing:-0.03px">readme.html</span></div>
  <div class="tr" style="top:351px"><svg class="ic" style="left:36px;top:5px" width="12" height="12" viewBox="0 0 12 12"><rect width="12" height="12" fill="#f5c131"/><text x="4" y="10.8" font-family="Liberation Sans,sans-serif" font-size="6.5" font-weight="bold" fill="#fff8e0" letter-spacing="-0.3">JS</text></svg><span class="t" style="letter-spacing:-0.13px">siteinfo.js</span></div>
  <div class="tr" style="top:373px"><svg class="ic" style="left:34px;top:4px" width="16" height="14" viewBox="0 0 16 14"><path d="M4 1C2.6 1 2.4 1.8 2.4 3V5C2.4 6.2 1.8 6.8 0.8 7C1.8 7.2 2.4 7.8 2.4 9V11C2.4 12.2 2.6 13 4 13M12 1C13.4 1 13.6 1.8 13.6 3V5C13.6 6.2 14.2 6.8 15.2 7C14.2 7.2 13.6 7.8 13.6 9V11C13.6 12.2 13.4 13 12 13" fill="none" stroke="#f2b73c" stroke-width="1.3"/><g fill="#f2b73c"><circle cx="5.6" cy="9.6" r=".55"/><circle cx="8" cy="9.6" r=".55"/><circle cx="10.4" cy="9.6" r=".55"/></g></svg><span class="t" style="letter-spacing:-0.16px">sitemap.json</span></div>
  <div class="abs" style="left:0;top:882px;width:199px;height:1px;background:#e6e6e6"></div>
  <div class="abs" style="left:0;top:883px;width:199px;height:22px;background:#fff"></div>
  <svg style="left:8.5px;top:891px" width="5" height="7" viewBox="0 0 5 7"><path d="M0.5 0.3L4.6 3.5L0.5 6.7Z" fill="#777"/></svg>
  <span class="t" style="left:20px;top:889px;font-size:11px;font-weight:bold;color:#555">大纲</span>
</div>
<!-- ============ EDITOR ============ -->
<div id="editor" class="abs">
  <div class="abs" style="left:0;top:0;width:769px;height:30px;background:#f2f2f2"></div>
  <div class="abs" style="left:0;top:0;width:120px;height:30px;background:#ececec"></div>
  <div class="abs" style="left:120px;top:0;width:119px;height:30px;background:#fff"></div>
  <svg style="left:12px;top:8px" width="12" height="12" viewBox="0 0 12 12"><rect width="12" height="12" fill="#f5c131"/><text x="4" y="10.8" font-family="Liberation Sans,sans-serif" font-size="6.5" font-weight="bold" fill="#fff8e0" letter-spacing="-0.3">JS</text></svg>
  <span class="t" style="left:32px;top:9px;font-size:13px;color:#555;letter-spacing:-0.05px">siteinfo.js</span>
  <svg style="left:131px;top:9px" width="14" height="12" viewBox="0 0 14 12"><path d="M2.2 0.4H13.6L12 9.4L6.4 11.6L0.6 9.4L1 6.8H3.4L3.2 7.8L6.6 9L9.8 7.8L10.2 5.6H1.6L2 3.2H10.6L10.8 2.6H1.8Z" fill="#42a5f5"/></svg>
  <span class="t" style="left:152px;top:9px;font-size:13px;color:#333;font-style:italic;letter-spacing:-0.5px">app.wxss</span>
  <svg style="left:219px;top:11px" width="9" height="9" viewBox="0 0 9 9" fill="none" stroke="#222" stroke-width="1"><path d="M0.5 0.5L8.5 8.5M8.5 0.5L0.5 8.5"/></svg>
  <svg style="left:705px;top:12px" width="12" height="12" viewBox="0 0 12 12" fill="none" stroke="#222" stroke-width="1"><rect x="0.6" y="0.6" width="10.8" height="10.8" rx="1"/><path d="M6 0.6V11.4"/></svg>
  <svg style="left:736px;top:17px" width="13" height="3" viewBox="0 0 13 3" fill="#333"><circle cx="1.3" cy="1.5" r="1"/><circle cx="6.5" cy="1.5" r="1"/><circle cx="11.7" cy="1.5" r="1"/></svg>
  <!-- breadcrumbs -->
  <svg style="left:8px;top:36px" width="15" height="11" viewBox="0 0 15 11" fill="none" stroke="#555" stroke-width="1"><path d="M0.2 1H1.4M3 1H14.8M0.2 4H1.4M3 4H14.8M0.2 7H1.4M3 7H14.8M0.2 10H1.4M3 10H14.8"/></svg>
  <svg style="left:40px;top:35px" width="11" height="14" viewBox="0 0 11 14" fill="none" stroke="#555" stroke-width="1"><path d="M1 0.8H10V12.8L5.5 8.8L1 12.8Z"/></svg>
  <svg style="left:69px;top:36px" width="13" height="11" viewBox="0 0 13 11" fill="none" stroke="#555" stroke-width="1"><path d="M12.6 5.5H1M5.4 1L1 5.5L5.4 10"/></svg>
  <svg style="left:97px;top:36px" width="13" height="11" viewBox="0 0 13 11" fill="none" stroke="#ccc" stroke-width="1"><path d="M0.4 5.5H12M7.6 1L12 5.5L7.6 10"/></svg>
  <svg style="left:127px;top:36px" width="13" height="11" viewBox="0 0 14 12"><path d="M2.2 0.4H13.6L12 9.4L6.4 11.6L0.6 9.4L1 6.8H3.4L3.2 7.8L6.6 9L9.8 7.8L10.2 5.6H1.6L2 3.2H10.6L10.8 2.6H1.8Z" fill="#42a5f5"/></svg>
  <span class="t" style="left:148px;top:35px;font-size:13px;color:#555;letter-spacing:-0.4px">app.wxss</span>
  <svg style="left:205px;top:37px" width="6" height="10" viewBox="0 0 6 10" fill="none" stroke="#666" stroke-width="1"><path d="M0.8 0.6L5.2 5L0.8 9.4"/></svg>
  <svg style="left:217px;top:35px" width="15" height="14" viewBox="0 0 15 14" fill="none" stroke="#e8a860" stroke-width="1"><rect x="1" y="1" width="4.4" height="4.4" rx="0.8" transform="rotate(0)"/><path d="M3.2 5.4V10.2H8.6M5.4 3.2H9.6"/><rect x="9" y="7.2" width="4.4" height="4.4" rx="0.8" transform="rotate(45 11.2 9.4)"/></svg>
  <span class="t" style="left:238px;top:35px;font-size:13px;color:#777;letter-spacing:-0.2px">page</span>
  <!-- indent guides -->
  <div class="abs" style="left:70px;top:76px;width:1px;height:48px;background:#d6d6d6"></div>
  <div class="abs" style="left:70px;top:196px;width:1px;height:240px;background:#d6d6d6"></div>
  <div class="abs" style="left:70px;top:508px;width:1px;height:96px;background:#d6d6d6"></div>
  <!-- scrollbar -->
  <div class="abs" style="left:754px;top:52px;width:15px;height:542px;border-left:1px solid #dcdcdc;border-top:1px solid #dcdcdc"></div>
  <div class="cl" style="top:53px"><span class="ln">1</span><svg class="fo" width="10" height="6" viewBox="0 0 10 6" fill="none" stroke="#555" stroke-width="1"><path d="M0.6 0.6L5 5L9.4 0.6"/></svg><span class="cd"><span>page</span> <span class="b">{</span></span></div>
  <div class="cl" style="top:77px"><span class="ln">2</span><span class="cd">    <span class="p">background-color</span><span class="k">:</span> <span class="sw"><i style="background:#f7f7f7"></i></span><span class="k">#f7f7f7</span><span class="k">;</span></span></div>
  <div class="cl" style="top:101px"><span class="ln">3</span><span class="cd">    <span class="p">font-size</span><span class="k">:</span> <span class="v">14px</span><span class="k">;</span></span></div>
  <div class="cl" style="top:125px"><span class="ln">4</span><span class="cd"><span class="b">}</span></span></div>
  <div class="cl" style="top:149px"><span class="ln">5</span><span class="cd"></span></div>
  <div class="cl" style="top:173px"><span class="ln">6</span><svg class="fo" width="10" height="6" viewBox="0 0 10 6" fill="none" stroke="#555" stroke-width="1"><path d="M0.6 0.6L5 5L9.4 0.6"/></svg><span class="cd"><span class="s">.tabbar_box</span> <span class="b">{</span></span></div>
  <div class="cl" style="top:197px"><span class="ln">7</span><span class="cd">    <span class="p">display</span><span class="k">:</span> <span class="v">flex</span><span class="k">;</span></span></div>
  <div class="cl" style="top:221px"><span class="ln">8</span><span class="cd">    <span class="p">justify-content</span><span class="k">:</span> <span class="v">space-around</span><span class="k">;</span></span></div>
  <div class="cl" style="top:245px"><span class="ln">9</span><span class="cd">    <span class="p">position</span><span class="k">:</span> <span class="v">fixed</span><span class="k">;</span></span></div>
  <div class="cl" style="top:269px"><span class="ln">10</span><span class="cd">    <span class="p">bottom</span><span class="k">:</span> <span class="v">0</span><span class="k">;</span></span></div>
  <div class="cl" style="top:293px"><span class="ln">11</span><span class="cd">    <span class="p">left</span><span class="k">:</span> <span class="v">0</span><span class="k">;</span></span></div>
  <div class="cl" style="top:317px"><span class="ln">12</span><span class="cd">    <span class="p">z-index</span><span class="k">:</span> <span class="v">999</span><span class="k">;</span></span></div>
  <div class="cl" style="top:341px"><span class="ln">13</span><span class="cd">    <span class="p">width</span><span class="k">:</span> <span class="v">100%</span><span class="k">;</span></span></div>
  <div class="cl" style="top:365px"><span class="ln">14</span><span class="cd">    <span class="p">height</span><span class="k">:</span> <span class="v">45px</span><span class="k">;</span></span></div>
  <div class="cl" style="top:389px"><span class="ln">15</span><span class="cd">    <span class="p">background-color</span><span class="k">:</span> <span class="sw"><i style="background:#fff"></i></span><span class="k">#FFF</span><span class="k">;</span></span></div>
  <div class="cl" style="top:413px"><span class="ln">16</span><span class="cd">    <span class="p">border-top</span><span class="k">:</span> <span class="v">1px solid</span> <span class="sw"><i style="background:#e7e7e7"></i></span><span class="k">#e7e7e7</span><span class="k">;</span></span></div>
  <div class="cl" style="top:437px"><span class="ln">17</span><span class="cd"><span class="b">}</span></span></div>
  <div class="cl" style="top:461px"><span class="ln">18</span><span class="cd"></span></div>
  <div class="cl" style="top:485px"><span class="ln">19</span><svg class="fo" width="10" height="6" viewBox="0 0 10 6" fill="none" stroke="#555" stroke-width="1"><path d="M0.6 0.6L5 5L9.4 0.6"/></svg><span class="cd"><span class="s">.tabbar_nav</span> <span class="b">{</span></span></div>
  <div class="cl" style="top:509px"><span class="ln">20</span><span class="cd">    <span class="p">display</span><span class="k">:</span> <span class="v">flex</span><span class="k">;</span></span></div>
  <div class="cl" style="top:533px"><span class="ln">21</span><span class="cd">    <span class="p">flex-direction</span><span class="k">:</span> <span class="v">column</span><span class="k">;</span></span></div>
  <div class="cl" style="top:557px"><span class="ln">22</span><span class="cd">    <span class="p">justify-content</span><span class="k">:</span> <span class="v">center</span><span class="k">;</span></span></div>
  <div class="cl" style="top:581px"><span class="ln">23</span><span class="cd">    <span class="p">align-items</span><span class="k">:</span> <span class="v">center</span><span class="k">;</span></span></div>
</div>
<!-- ============ DEBUGGER ============ -->
<div id="debugger" class="abs">
  <!-- panel header -->
  <div class="abs" style="left:0;top:0;width:769px;height:34px;background:#f3f3f3;border-top:1px solid #dcdcdc"></div>
  <span class="t" style="left:20px;top:13px;font-size:11px;color:#333">调试器</span>
  <div class="abs" style="left:20px;top:31px;width:34px;height:1px;background:#333"></div>
  <span class="t" style="left:73px;top:13px;font-size:11px;color:#666">问题</span>
  <span class="t" style="left:115px;top:13px;font-size:11px;color:#666">输出</span>
  <span class="t" style="left:157px;top:13px;font-size:11px;color:#666">终端</span>
  <svg style="left:705px;top:13px" width="11" height="7" viewBox="0 0 11 7" fill="none" stroke="#222" stroke-width="1"><path d="M0.6 6.2L5.5 1L10.4 6.2"/></svg>
  <svg style="left:737px;top:12px" width="9" height="9" viewBox="0 0 9 9" fill="none" stroke="#222" stroke-width="1"><path d="M0.5 0.5L8.5 8.5M8.5 0.5L0.5 8.5"/></svg>
  <!-- devtools tabs -->
  <div class="abs" style="left:0;top:34px;width:769px;height:27px;background:#333;border-bottom:1px solid #474747"></div>
  <svg style="left:10px;top:40px" width="15" height="15" viewBox="0 0 15 15" fill="none" stroke="#919191" stroke-width="1.2"><path d="M12 5V1H1V12H5"/><path d="M6.4 6.4L13.6 9.2L10.6 10.4L12.8 13.4L11.6 14.2L9.6 11.2L7.6 13.2Z" fill="#919191" stroke="none"/></svg>
  <div class="abs" style="left:34px;top:39px;width:1px;height:17px;background:#4a4a4a"></div>
  <div class="abs" style="left:41px;top:34px;width:54px;height:26px;background:#000"></div>
  <span class="dt" style="left:53px;top:41px;color:#fff">Wxml</span>
  <span class="dt" style="left:106px;top:41px">Console</span>
  <span class="dt" style="left:172px;top:41px">Sources</span>
  <span class="dt" style="left:237px;top:41px">Network</span>
  <span class="dt" style="left:306px;top:41px">Memory</span>
  <span class="dt" style="left:374px;top:41px">Security</span>
  <span class="dt" style="left:440px;top:41px">Mock</span>
  <span class="dt" style="left:493px;top:41px">AppData</span>
  <svg style="left:560px;top:43px" width="10" height="9" viewBox="0 0 10 9" fill="none" stroke="#a8a8a8" stroke-width="1.2"><path d="M1 0.8L4.6 4.5L1 8.2M5.4 0.8L9 4.5L5.4 8.2"/></svg>
  <svg style="left:638px;top:41px" width="12" height="12" viewBox="0 0 12 12"><circle cx="6" cy="6" r="5.6" fill="#e8334a"/><path d="M3.8 3.8L8.2 8.2M8.2 3.8L3.8 8.2" stroke="#fff" stroke-width="1.5"/></svg>
  <span class="dt" style="left:654px;top:41px">13</span>
  <svg style="left:670px;top:41px" width="13" height="12" viewBox="0 0 13 12"><path d="M6.5 0.4L12.8 11.6H0.2Z" fill="#f5c21a"/><path d="M6.5 4V8" stroke="#fff" stroke-width="1.4"/><circle cx="6.5" cy="9.8" r=".8" fill="#fff"/></svg>
  <span class="dt" style="left:687px;top:41px">11</span>
  <div class="abs" style="left:705px;top:39px;width:1px;height:17px;background:#4a4a4a"></div>
  <svg style="left:723px;top:40px" width="3" height="14" viewBox="0 0 3 14" fill="#a8a8a8"><circle cx="1.5" cy="1.8" r="1.4"/><circle cx="1.5" cy="7" r="1.4"/><circle cx="1.5" cy="12.2" r="1.4"/></svg>
  <svg style="left:743px;top:40px" width="18" height="15" viewBox="0 0 18 15"><path d="M0.5 4.6H4V10.8H12.6V14.6H0.5Z" fill="#6e6e6e"/><rect x="5.2" y="1" width="11.8" height="8.6" fill="none" stroke="#7a7a7a" stroke-width="1.7"/></svg>
  <!-- elements -->
  <span class="el" style="left:13.5px;top:65px">&lt;page&gt;</span>
  <svg style="left:17px;top:85px" width="6" height="8" viewBox="0 0 6 8"><path d="M0.4 0.4L5.6 4L0.4 7.6Z" fill="#919191"/></svg>
  <span class="el" style="left:25.8px;top:82px">&lt;view <span class="an">class</span>="<span class="av">tabhead</span>" <span class="an">style</span>="<span class="av">height:64px;</span>"&gt;<span style="color:#ddd">…</span>&lt;/view&gt;</span>
  <span class="el" style="left:25.8px;top:99px">&lt;view <span class="an">style</span>="<span class="av">height:64px;</span>"&gt;&lt;/view&gt;</span>
  <svg style="left:17px;top:119px" width="6" height="8" viewBox="0 0 6 8"><path d="M0.4 0.4L5.6 4L0.4 7.6Z" fill="#919191"/></svg>
  <span class="el" style="left:25.8px;top:116px">&lt;view <span class="an">class</span>="<span class="av">head</span>"&gt;<span style="color:#ddd">…</span>&lt;/view&gt;</span>
  <!-- elements scrollbar -->
  <div class="abs" style="left:429px;top:61px;width:14px;height:60px;background:#2b2b2b;border-left:1px solid #3a3a3a"></div>
  <div class="abs" style="left:430px;top:61px;width:13px;height:16px;background:#444"></div>
  <!-- lower filler -->
  <div class="abs" style="left:0;top:121px;width:443px;height:23px;background:#333;border-top:1px solid #4a4a4a"></div>
  <!-- styles pane -->
  <div class="abs" style="left:443px;top:61px;width:326px;height:83px;background:#242424;border-left:1px solid #4a4a4a"></div>
  <div class="abs" style="left:444px;top:61px;width:325px;height:26px;background:#333;border-bottom:1px solid #474747"></div>
  <div class="abs" style="left:444px;top:61px;width:50px;height:26px;background:#000"></div>
  <span class="dt" style="left:454px;top:68px;color:#fff">Styles</span>
  <span class="dt" style="left:504px;top:68px">Computed</span>
  <span class="dt" style="left:580px;top:68px">Dataset</span>
  <span class="dt" style="left:640px;top:68px">Component Data</span>
  <svg style="left:749px;top:70px" width="10" height="9" viewBox="0 0 10 9" fill="none" stroke="#a8a8a8" stroke-width="1.2"><path d="M1 0.8L4.6 4.5L1 8.2M5.4 0.8L9 4.5L5.4 8.2"/></svg>
  <div class="abs" style="left:444px;top:87px;width:311px;height:29px;background:#333;border-bottom:1px solid #474747"></div>
  <div class="abs" style="left:447px;top:91px;width:264px;height:20px;background:#242424"></div>
  <span class="dt" style="left:452px;top:95px;color:#8a8a8a">Filter</span>
  <span class="t mono" style="left:721px;top:96px;font-size:11px;color:#bbb">.cls</span>
  <div class="abs" style="left:755px;top:87px;width:14px;height:57px;background:#2b2b2b;border-left:1px solid #3a3a3a"></div>
  <div class="abs" style="left:756px;top:88px;width:13px;height:16px;background:#444"></div>
  <!-- console drawer header -->
  <div class="abs" style="left:0;top:144px;width:769px;height:28px;background:#333;border-top:1px solid #4a4a4a;border-bottom:1px solid #474747"></div>
  <svg style="left:14.5px;top:151px" width="3" height="14" viewBox="0 0 3 14" fill="#a8a8a8"><circle cx="1.5" cy="1.8" r="1.3"/><circle cx="1.5" cy="7" r="1.3"/><circle cx="1.5" cy="12.2" r="1.3"/></svg>
  <div class="abs" style="left:28px;top:145px;width:62px;height:26px;background:#000"></div>
  <span class="dt" style="left:38px;top:153px;color:#fff">Console</span>
  <svg style="left:747px;top:153px" width="10" height="10" viewBox="0 0 10 10" fill="none" stroke="#a8a8a8" stroke-width="1.3"><path d="M0.8 0.8L9.2 9.2M9.2 0.8L0.8 9.2"/></svg>
  <!-- console toolbar -->
  <div class="abs" style="left:0;top:172px;width:769px;height:27px;background:#333;border-bottom:1px solid #474747"></div>
  <svg style="left:8px;top:179px" width="15" height="13" viewBox="0 0 15 13" fill="none" stroke="#919191" stroke-width="1.2"><rect x="0.8" y="0.8" width="13.4" height="11.4"/><path d="M4.4 0.8V12.2"/><path d="M7.2 3.6L11.4 6.5L7.2 9.4Z" fill="#919191" stroke="none"/></svg>
  <svg style="left:38px;top:179px" width="13" height="13" viewBox="0 0 13 13" fill="none" stroke="#919191" stroke-width="1.6"><circle cx="6.5" cy="6.5" r="5.4"/><path d="M2.8 2.8L10.2 10.2"/></svg>
  <div class="abs" style="left:62px;top:177px;width:1px;height:17px;background:#4a4a4a"></div>
  <div class="abs" style="left:67px;top:172px;width:138px;height:26px;background:#580000"></div>
  <span class="dt" style="left:72px;top:179px;color:#b9a0a0">appservice</span>
  <svg style="left:193px;top:182px" width="8" height="7" viewBox="0 0 8 7"><path d="M0.3 0.4H7.7L4 6.6Z" fill="#a8a8a8"/></svg>
  <div class="abs" style="left:210px;top:177px;width:1px;height:17px;background:#4a4a4a"></div>
  <svg style="left:220px;top:180px" width="17" height="11" viewBox="0 0 17 11"><path d="M0.4 5.5C2.4 2 5.2 0.4 8.5 0.4C11.8 0.4 14.6 2 16.6 5.5C14.6 9 11.8 10.6 8.5 10.6C5.2 10.6 2.4 9 0.4 5.5Z" fill="#919191"/><circle cx="8.5" cy="5.5" r="3.2" fill="#333"/><circle cx="8.5" cy="5.5" r="1.7" fill="#919191"/></svg>
  <div class="abs" style="left:247px;top:177px;width:1px;height:17px;background:#4a4a4a"></div>
  <div class="abs" style="left:254px;top:176px;width:160px;height:19px;background:#242424"></div>
  <span class="dt" style="left:259px;top:180px;color:#777">Filter</span>
  <span class="dt" style="left:422px;top:179px">Default levels</span>
  <svg style="left:497px;top:182px" width="8" height="7" viewBox="0 0 8 7"><path d="M0.3 0.4H7.7L4 6.6Z" fill="#a8a8a8"/></svg>
  <div class="abs" style="left:676px;top:177px;width:1px;height:17px;background:#4a4a4a"></div>
  <span class="dt" style="left:686px;top:179px;color:#777">3 hidden</span>
  <svg style="left:745px;top:178px" width="15" height="15" viewBox="0 0 15 15"><path d="M6.2 0.4H8.8L9.2 2.4L10.6 3L12.3 1.9L14.1 3.7L13 5.4L13.6 6.8L15.6 7.2" fill="none"/><g fill="#919191"><circle cx="7.5" cy="7.5" r="5.2"/><rect x="6.2" y="0.2" width="2.6" height="14.6" rx=".4"/><rect x="6.2" y="0.2" width="2.6" height="14.6" rx=".4" transform="rotate(45 7.5 7.5)"/><rect x="6.2" y="0.2" width="2.6" height="14.6" rx=".4" transform="rotate(90 7.5 7.5)"/><rect x="6.2" y="0.2" width="2.6" height="14.6" rx=".4" transform="rotate(135 7.5 7.5)"/></g><circle cx="7.5" cy="7.5" r="2.3" fill="#333"/></svg>
  <!-- console messages -->
  <div class="cm" style="top:199px;height:23px;background:#290000;border-top:1px solid #5c0000;border-bottom:1px solid #5c0000">
    <div class="abs" style="left:9px;top:5px;width:29px;height:13px;border-radius:7px;background:#e0283c"></div>
    <svg style="left:16px;top:8px" width="6" height="7" viewBox="0 0 6 7"><path d="M0.4 0.3L5.6 3.5L0.4 6.7Z" fill="#4a0000"/></svg>
    <span class="t" style="left:25px;top:6px;font-family:'Liberation Sans',sans-serif;color:#4a0000;font-style:italic">7</span>
    <span class="t" style="left:50px;top:6px;color:#ff8080">[<span class="cj">渲染层错误</span>] <span class="cj">广告单元</span> id(unit-id) <span class="cj">为空，请先在</span> '&lt;URL&gt;' <span class="cj">上创建广告单元</span></span>
  </div>
  <div class="cm" style="top:222px;height:22px;background:#242424">
    <svg style="left:25px;top:7px" width="6" height="8" viewBox="0 0 6 8"><path d="M0.4 0.4L5.6 4L0.4 7.6Z" fill="#919191"/></svg>
    <span class="t" style="left:35px;top:6px;color:#d5d5d5;font-style:italic">{<span style="color:#9a9a9a">info</span>: Array(0), <span style="color:#9a9a9a">status</span>: <span style="color:#9980ff">1</span>}</span>
    <span class="t" style="left:626px;top:6px;color:#b0b0b0;text-decoration:underline">news.js? [sm]:6</span>
  </div>
  <div class="cm" style="top:244px;height:20px;background:#332b00;border-top:1px solid #665500;border-bottom:1px solid #665500">
    <svg style="left:6px;top:3px" width="12" height="11" viewBox="0 0 13 12"><path d="M6.5 0.4L12.8 11.6H0.2Z" fill="#f5c21a"/><path d="M6.5 4V8" stroke="#fff" stroke-width="1.4"/><circle cx="6.5" cy="9.8" r=".8" fill="#fff"/></svg>
    <span class="t" style="left:24px;top:4.5px;color:#f2dc9a">[sitemap <span class="cj">索引情况提示</span>] <span class="cj">根据</span> sitemap <span class="cj">的规则</span>[0]<span class="cj">，当前页面</span> [pages/my1/my] <span class="cj">将被索引</span></span>
  </div>
  <div class="cm" style="top:264px;height:34px;background:#290000;border-bottom:1px solid #5c0000">
    <svg style="left:6px;top:4px" width="11" height="11" viewBox="0 0 12 12"><circle cx="6" cy="6" r="5.6" fill="#e8334a"/><path d="M3.8 3.8L8.2 8.2M8.2 3.8L3.8 8.2" stroke="#fff" stroke-width="1.5"/></svg>
    <span class="t" style="left:24px;top:6px;color:#ff8080">[<span class="cj">渲染层网络层错误</span>] Failed to load local image resource /images/home.png </span>
    <span class="t" style="left:30.6px;top:20px;color:#ff8080">the server responded with a status of 500 (HTTP/1.1 500 Internal Server Error) </span>
  </div>
  <div class="cm" style="top:298px;height:20px;background:#332b00;border-bottom:1px solid #665500">
    <svg style="left:6px;top:3px" width="12" height="11" viewBox="0 0 13 12"><path d="M6.5 0.4L12.8 11.6H0.2Z" fill="#f5c21a"/><path d="M6.5 4V8" stroke="#fff" stroke-width="1.4"/><circle cx="6.5" cy="9.8" r=".8" fill="#fff"/></svg>
    <span class="t" style="left:24px;top:4.5px;color:#f2dc9a">[sitemap <span class="cj">索引情况提示</span>] <span class="cj">根据</span> sitemap <span class="cj">的规则</span>[0]<span class="cj">，当前页面</span> [pages/history/history] <span class="cj">将被索引</span></span>
  </div>
  <!-- console scrollbar -->
  <div class="abs" style="left:754px;top:199px;width:15px;height:112px;background:#2b2b2b;border-left:1px solid #3a3a3a"></div>
  <div class="abs" style="left:755px;top:217px;width:14px;height:20px;background:#444"></div>
</div>
<!-- ============ STATUS ============ -->
<div id="status" class="abs">
  <svg style="left:16px;top:8.5px" width="12" height="12" viewBox="0 0 12 12" fill="none" stroke="#555" stroke-width="1"><circle cx="6" cy="6" r="5.4"/><path d="M3.8 3.8L8.2 8.2M8.2 3.8L3.8 8.2"/></svg>
  <span class="t" style="left:32px">0</span>
  <svg style="left:43px;top:8.5px" width="13" height="12" viewBox="0 0 13 12" fill="none" stroke="#555" stroke-width="1"><path d="M6.5 0.8L12.4 11.4H0.6Z"/><path d="M6.5 4.4V8M6.5 9V10.2"/></svg>
  <span class="t" style="left:59px">0</span>
  <span class="t" style="left:700px;top:8.8px;font-size:12px;letter-spacing:-0.2px">行 1，列 1</span>
  <span class="t" style="left:772px;top:8.8px;font-size:12px;letter-spacing:-0.3px">空格: 4</span>
  <span class="t" style="left:824px">UTF-8</span>
  <span class="t" style="left:872px;letter-spacing:-1px">LF</span>
  <span class="t" style="left:899px;letter-spacing:-1.1px">CSS</span>
  <svg style="left:939.5px;top:8.5px" width="11.5" height="13" viewBox="0 0 12 14" fill="none" stroke="#555" stroke-width="1"><path d="M1 10.6H11L9.8 8.6V5.2C9.8 2.8 8.2 1 6 1C3.8 1 2.2 2.8 2.2 5.2V8.6Z"/><path d="M4.6 11.4C4.8 13 7.2 13 7.4 11.4"/></svg>
</div>
<div id="vsplit1" class="abs"></div>
<div class="abs" style="left:1469px;top:92px;width:1px;height:932px;background:#cfcfcf"></div>
<div id="vsplit2" class="abs"></div>
<!-- ============ WATERMARK ============ -->
<div id="wm" class="t" style="left:765.5px;top:962px;font-size:50.67px;color:#000;font-family:'Liberation Sans','Noto Sans CJK SC',sans-serif">九块九源码网</div>
<div id="wm2" class="t" style="left:1081px;top:962px;font-size:50.67px;color:#000;font-family:'Liberation Sans',sans-serif">www.9k9ym.com</div>
</body>
</html>
